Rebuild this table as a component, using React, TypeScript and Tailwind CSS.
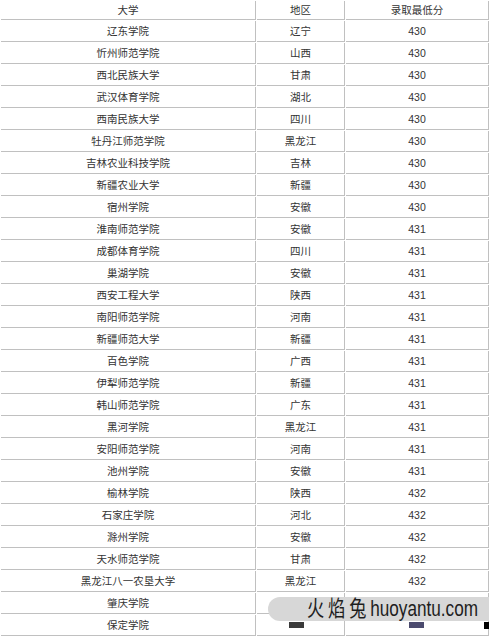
import React from "react";

const rows: [string, string, string][] = [
  ["辽东学院", "辽宁", "430"],
  ["忻州师范学院", "山西", "430"],
  ["西北民族大学", "甘肃", "430"],
  ["武汉体育学院", "湖北", "430"],
  ["西南民族大学", "四川", "430"],
  ["牡丹江师范学院", "黑龙江", "430"],
  ["吉林农业科技学院", "吉林", "430"],
  ["新疆农业大学", "新疆", "430"],
  ["宿州学院", "安徽", "430"],
  ["淮南师范学院", "安徽", "431"],
  ["成都体育学院", "四川", "431"],
  ["巢湖学院", "安徽", "431"],
  ["西安工程大学", "陕西", "431"],
  ["南阳师范学院", "河南", "431"],
  ["新疆师范大学", "新疆", "431"],
  ["百色学院", "广西", "431"],
  ["伊犁师范学院", "新疆", "431"],
  ["韩山师范学院", "广东", "431"],
  ["黑河学院", "黑龙江", "431"],
  ["安阳师范学院", "河南", "431"],
  ["池州学院", "安徽", "431"],
  ["榆林学院", "陕西", "432"],
  ["石家庄学院", "河北", "432"],
  ["滁州学院", "安徽", "432"],
  ["天水师范学院", "甘肃", "432"],
  ["黑龙江八一农垦大学", "黑龙江", "432"],
  ["肇庆学院", "", ""],
  ["保定学院", "", ""],
];

const cell =
  "flex items-center justify-center border-r border-b border-[#c0c0c0] text-[10.5px] text-[#333] leading-none";

export default function App() {
  return (
    <div
      className="relative w-[489px] h-[636px] overflow-hidden bg-white"
      style={{ fontFamily: '"Liberation Sans", "Noto Sans CJK SC", sans-serif' }}
    >
      <div className="grid grid-cols-[255px_88px_143px] gap-px pl-px pt-px">
        <div className={`${cell} h-[19px]`}>大学</div>
        <div className={`${cell} h-[19px]`}>地区</div>
        <div className={`${cell} h-[19px]`}>录取最低分</div>
        {rows.map((r, i) => (
          <React.Fragment key={i}>
            <div className={`${cell} h-[21px]`}>{r[0]}</div>
            <div className={`${cell} h-[21px]`}>{r[1]}</div>
            <div className={`${cell} h-[21px]`}>{r[2]}</div>
          </React.Fragment>
        ))}
      </div>

      {/* leftover marks */}
      <div className="absolute left-[289px] top-[622px] w-[15px] h-[6px] bg-[#3a3a3a]" />
      <div className="absolute left-[409px] top-[622px] w-[15px] h-[6px] bg-[#4b4a6e]" />
      <div className="absolute left-[484px] top-[622px] w-[5px] h-[7px] bg-black" />

      {/* watermark */}
      <div className="absolute left-[268px] top-[597px] w-[221px] h-[24px] rounded-l-full bg-[#d7d7d7] flex items-center pl-[39px] overflow-hidden">
        <span className="inline-flex items-center gap-[5px] origin-left scale-x-[0.78] whitespace-nowrap text-[22px] leading-none text-[#1e1e1e]">
          <span>火</span>
          <span>焰</span>
          <span>兔</span>
          <span>huoyantu.com</span>
        </span>
      </div>
    </div>
  );
}
